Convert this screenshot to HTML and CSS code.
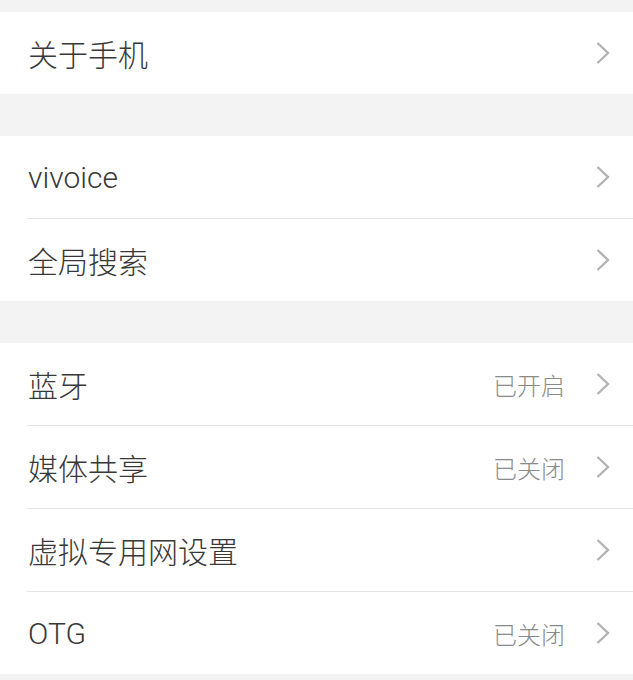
FILE: index.html
```html
<!DOCTYPE html>
<html lang="zh-CN">
<head>
<meta charset="utf-8">
<title>设置</title>
<link rel="stylesheet" href="styles.css">
</head>
<body>
<div class="page">
  <div class="group">
    <div class="row"><span class="label">关于手机</span><span class="right"><svg class="chev" viewBox="0 0 16 24"><path d="M2.5 2 L13 12 L2.5 22"/></svg></span></div>
  </div>
  <div class="group">
    <div class="row"><span class="label">vivoice</span><span class="right"><svg class="chev" viewBox="0 0 16 24"><path d="M2.5 2 L13 12 L2.5 22"/></svg></span></div>
    <div class="row"><span class="label">全局搜索</span><span class="right"><svg class="chev" viewBox="0 0 16 24"><path d="M2.5 2 L13 12 L2.5 22"/></svg></span></div>
  </div>
  <div class="group">
    <div class="row"><span class="label">蓝牙</span><span class="right"><span class="value">已开启</span><svg class="chev" viewBox="0 0 16 24"><path d="M2.5 2 L13 12 L2.5 22"/></svg></span></div>
    <div class="row"><span class="label">媒体共享</span><span class="right"><span class="value">已关闭</span><svg class="chev" viewBox="0 0 16 24"><path d="M2.5 2 L13 12 L2.5 22"/></svg></span></div>
    <div class="row"><span class="label">虚拟专用网设置</span><span class="right"><svg class="chev" viewBox="0 0 16 24"><path d="M2.5 2 L13 12 L2.5 22"/></svg></span></div>
    <div class="row"><span class="label">OTG</span><span class="right"><span class="value">已关闭</span><svg class="chev" viewBox="0 0 16 24"><path d="M2.5 2 L13 12 L2.5 22"/></svg></span></div>
  </div>
</div>
</body>
</html>
```
FILE: styles.css
```css
html, body {
  margin: 0;
  padding: 0;
  background: #f3f3f3;
}
body {
  font-family: "Roboto", "Noto Sans CJK SC", sans-serif;
  color: #383838;
}
.page {
  display: flex;
  flex-direction: column;
  gap: 42px;
  padding-top: 12px;
}
.group {
  background: #fff;
  padding-left: 27px;
}
.row {
  height: 82px;
  display: flex;
  align-items: center;
  justify-content: space-between;
  padding-right: 22px;
}
.row + .row {
  border-top: 1px solid #e4e4e4;
}
.label {
  font-size: 30px;
  font-weight: 300;
  padding-left: 1px;
}
.right {
  display: flex;
  align-items: center;
  gap: 30px;
}
.value {
  font-size: 24px;
  font-weight: 300;
  color: #8a8a8a;
}
.chev {
  width: 16px;
  height: 24px;
  fill: none;
  stroke: #b3b3b3;
  stroke-width: 2.4;
}
```
